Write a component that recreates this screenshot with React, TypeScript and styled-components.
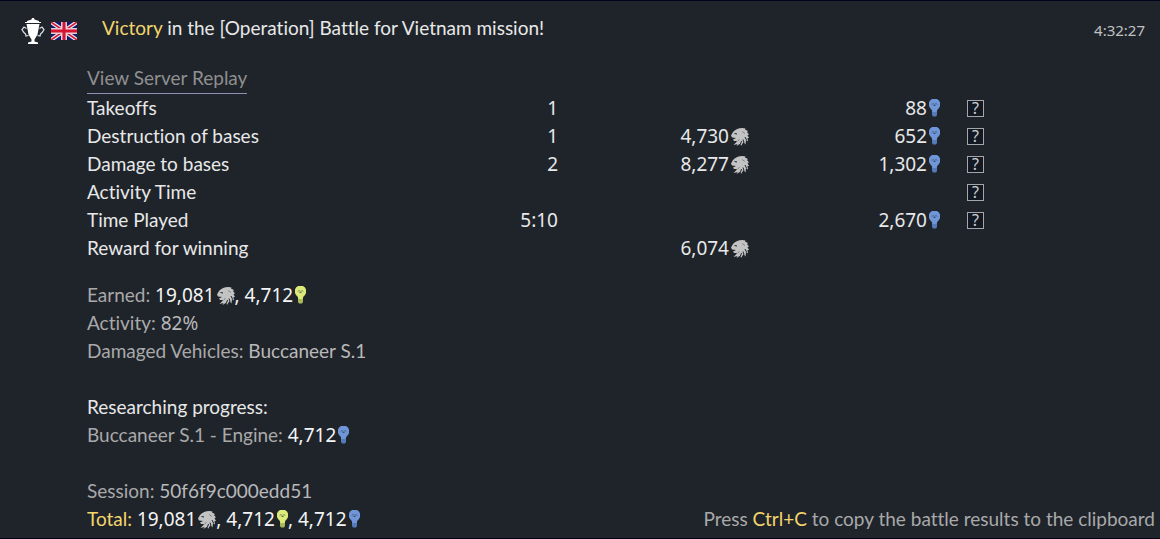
import React from "react";
import styled, { createGlobalStyle } from "styled-components";

const GlobalStyle = createGlobalStyle`
  * { box-sizing: border-box; }
  body {
    margin: 0;
    background: #1f242b;
  }
`;

const textFont = `Lato, "Open Sans", sans-serif`;
const numberFont = `"Noto Sans", "Open Sans", sans-serif`;

const Page = styled.main`
  display: flex;
  flex-direction: column;
  min-height: 100vh;
  border-top: 1px solid #02031a;
  border-bottom: 1px solid #02031a;
  background: #1f242b;
  color: #e8e8e8;
  font: 400 19px/28px ${textFont};
  font-variant-ligatures: none;
`;

const Header = styled.header`
  display: flex;
  align-items: center;
  padding: 13px 15px 0 21px;
`;

const Badges = styled.div`
  display: flex;
  align-items: center;
  gap: 6px;
  width: 81px;
  height: 28px;
  padding-top: 5px;
  svg { display: block; }
`;

const Title = styled.h1`
  flex: 1;
  margin: 0;
  font: inherit;
`;

const Clock = styled.time`
  color: #c0c0c0;
  padding-top: 4px;
  font: 400 15px/24px ${numberFont};
`;

const Content = styled.section`
  padding: 22px 16px 0 87px;
`;

const ReplayLink = styled.a`
  display: block;
  width: fit-content;
  height: 30px;
  border-bottom: 1px solid #8d92b4;
  color: #8f8f8f;
  line-height: 27px;
  text-decoration: none;
`;

const Results = styled.table`
  border-collapse: collapse;
  table-layout: fixed;
  width: 897px;
  max-width: 100%;
  th, td { padding: 0; height: 28px; line-height: 28px; }
  th { font-weight: inherit; text-align: left; }
`;

const Columns = styled.colgroup`
  col:nth-child(2) { width: 92px; }
  col:nth-child(3) { width: 191px; }
  col:nth-child(4) { width: 191px; }
  col:nth-child(5) { width: 44px; }
`;

const Num = styled.span`
  font-family: ${numberFont};
`;

const Figure = styled.td`
  text-align: right;
  font-family: ${numberFont};
`;

const HelpCell = styled.td`
  text-align: right;
`;

const HelpButton = styled.button`
  display: block;
  width: 17px;
  height: 17px;
  margin: 0 0 0 auto;
  padding: 0;
  border: 1px solid #a4a6aa;
  background: #131922;
  color: #d0d0d0;
  font: 400 16px/15px ${numberFont};
`;

const Summary = styled.div`
  padding: 19px 16px 0 87px;
  p { margin: 0; }
  p + h2 { margin-top: 28px; }
`;

const Heading = styled.h2`
  margin: 0;
  font: inherit;
`;

const Muted = styled.p`
  color: #a9a9a9;
`;

const Soft = styled.span`
  color: #b9b9b9;
`;

const White = styled(Num)`
  color: #f4f4f4;
`;

const Gold = styled.span`
  color: #f3d56c;
`;

const Footer = styled.footer`
  display: flex;
  flex-wrap: wrap;
  align-items: flex-end;
  justify-content: space-between;
  padding: 28px 5px 4px 87px;
  p { margin: 0; }
`;

const Icon = styled.svg`
  display: inline-block;
  margin-left: 2px;
  vertical-align: -3px;
`;

const BulbIcon = styled(Icon)`
  vertical-align: -2px;
`;

const Lion = () => (
  <Icon width="18" height="18" viewBox="0 0 36 36" role="img" aria-label="Silver Lions">
    <path
      fill="#c3c3c3"
      d="M4 8C9 3 15 0 23 0L29 1 28 3 34 6 32 8 36 13 33 14 36 20 33 20 34 27 30 24 29 33 25 28 20 36 19 31 11 36 13 32 5 34 10 29 12 26 6 26 4 23 10 20 2 19 0 15Z"
    />
    <path
      fill="none"
      stroke="#1f242b"
      strokeWidth="2"
      d="M7 11l5 1M31 24 28 18M26 29 24 23M19 32 21 26"
    />
    <path
      fill="none"
      stroke="#6b6f75"
      strokeWidth="1.4"
      d="M22 7l6 4M13 27l4-5"
    />
  </Icon>
);

const Bulb = ({ color, base }: { color: string; base: string }) => (
  <BulbIcon width="11" height="18" viewBox="0 0 22 36" role="img" aria-label="Research Points">
    <path fill={base} d="M6 22h10v10l-2 3H8l-2-3Z" />
    <path
      fill={color}
      d="M6 0h10l4 3 2 4v7l-2 4-3 3-2 5H7l-2-5-3-3-2-4V7l2-4Z"
    />
    <path
      fill="none"
      stroke="#293244"
      strokeWidth="1.4"
      d="M6 11l2-2 2 2M12 11l2-2 2 2M9 13h4"
    />
  </BulbIcon>
);

const BlueBulb = () => <Bulb color="#6f96d8" base="#557abb" />;
const GreenBulb = () => <Bulb color="#dbea78" base="#a9b958" />;

const Trophy = () => (
  <svg width="24" height="26" viewBox="0 0 48 52" role="img" aria-label="Victory">
    <path fill="#fff" d="M22 0h4l1 3 9 3v2H12V6l9-3ZM8 8h32v2H8Z" />
    <path
      fill="#fff"
      d="M11 12h26l-4 21-6 10v4l7 2v3H14v-3l7-2v-4l-6-10Z"
    />
    <path
      fill="none"
      stroke="#d9dde2"
      strokeWidth="2.5"
      d="M11 21 6 18 2 23l3 5 4 4 1 4 5-1M37 21l5-3 4 5-3 5-4 4-1 4-5-1"
    />
  </svg>
);

const UnionJack = () => (
  <svg width="26" height="18" viewBox="0 0 26 18" role="img" aria-label="Great Britain">
    <path fill="#101a6c" d="M0 0h26v18H0Z" />
    <path stroke="#e6e2ec" strokeWidth="4" d="M0 0l26 18M26 0 0 18" />
    <path stroke="#d71532" strokeWidth="1.5" d="M0 0l26 18M26 0 0 18" />
    <path stroke="#e6ccd6" strokeWidth="6" d="M13 0v18M0 9h26" />
    <path stroke="#d71532" strokeWidth="3" d="M13 0v18M0 9h26" />
  </svg>
);

type Row = {
  label: string;
  count?: string;
  silver?: string;
  research?: string;
  help?: boolean;
};

const rows: Row[] = [
  { label: "Takeoffs", count: "1", research: "88", help: true },
  { label: "Destruction of bases", count: "1", silver: "4,730", research: "652", help: true },
  { label: "Damage to bases", count: "2", silver: "8,277", research: "1,302", help: true },
  { label: "Activity Time", help: true },
  { label: "Time Played", count: "5:10", research: "2,670", help: true },
  { label: "Reward for winning", silver: "6,074" },
];

export default function App() {
  return (
    <Page>
      <GlobalStyle />
      <Header>
        <Badges>
          <Trophy />
          <UnionJack />
        </Badges>
        <Title>
          <Gold>Victory</Gold> in the [Operation] Battle for Vietnam mission!
        </Title>
        <Clock>4:32:27</Clock>
      </Header>

      <Content>
        <ReplayLink href="#replay">View Server Replay</ReplayLink>
        <Results>
          <Columns>
            <col />
            <col />
            <col />
            <col />
            <col />
          </Columns>
          <tbody>
            {rows.map((row) => (
              <tr key={row.label}>
                <th scope="row">{row.label}</th>
                <Figure>{row.count}</Figure>
                <Figure>{row.silver && <>{row.silver}<Lion /></>}</Figure>
                <Figure>{row.research && <>{row.research}<BlueBulb /></>}</Figure>
                <HelpCell>
                  {row.help && <HelpButton aria-label={`About ${row.label}`}>?</HelpButton>}
                </HelpCell>
              </tr>
            ))}
          </tbody>
        </Results>
      </Content>

      <Summary>
        <Muted>
          Earned: <White>19,081<Lion />, 4,712<GreenBulb /></White>
        </Muted>
        <Muted>
          Activity: <Soft><Num>82%</Num></Soft>
        </Muted>
        <Muted>
          Damaged Vehicles: <Soft>Buccaneer S.1</Soft>
        </Muted>
        <Heading>Researching progress:</Heading>
        <Muted>
          Buccaneer S.1 - Engine: <White>4,712<BlueBulb /></White>
        </Muted>
      </Summary>

      <Footer>
        <div>
          <Muted>
            Session: <Soft>50f6f9c000edd51</Soft>
          </Muted>
          <p>
            <Gold>Total:</Gold>{" "}
            <White>19,081<Lion />, 4,712<GreenBulb />, 4,712<BlueBulb /></White>
          </p>
        </div>
        <Muted>
          Press <Gold>Ctrl+C</Gold> to copy the battle results to the clipboard
        </Muted>
      </Footer>
    </Page>
  );
}
